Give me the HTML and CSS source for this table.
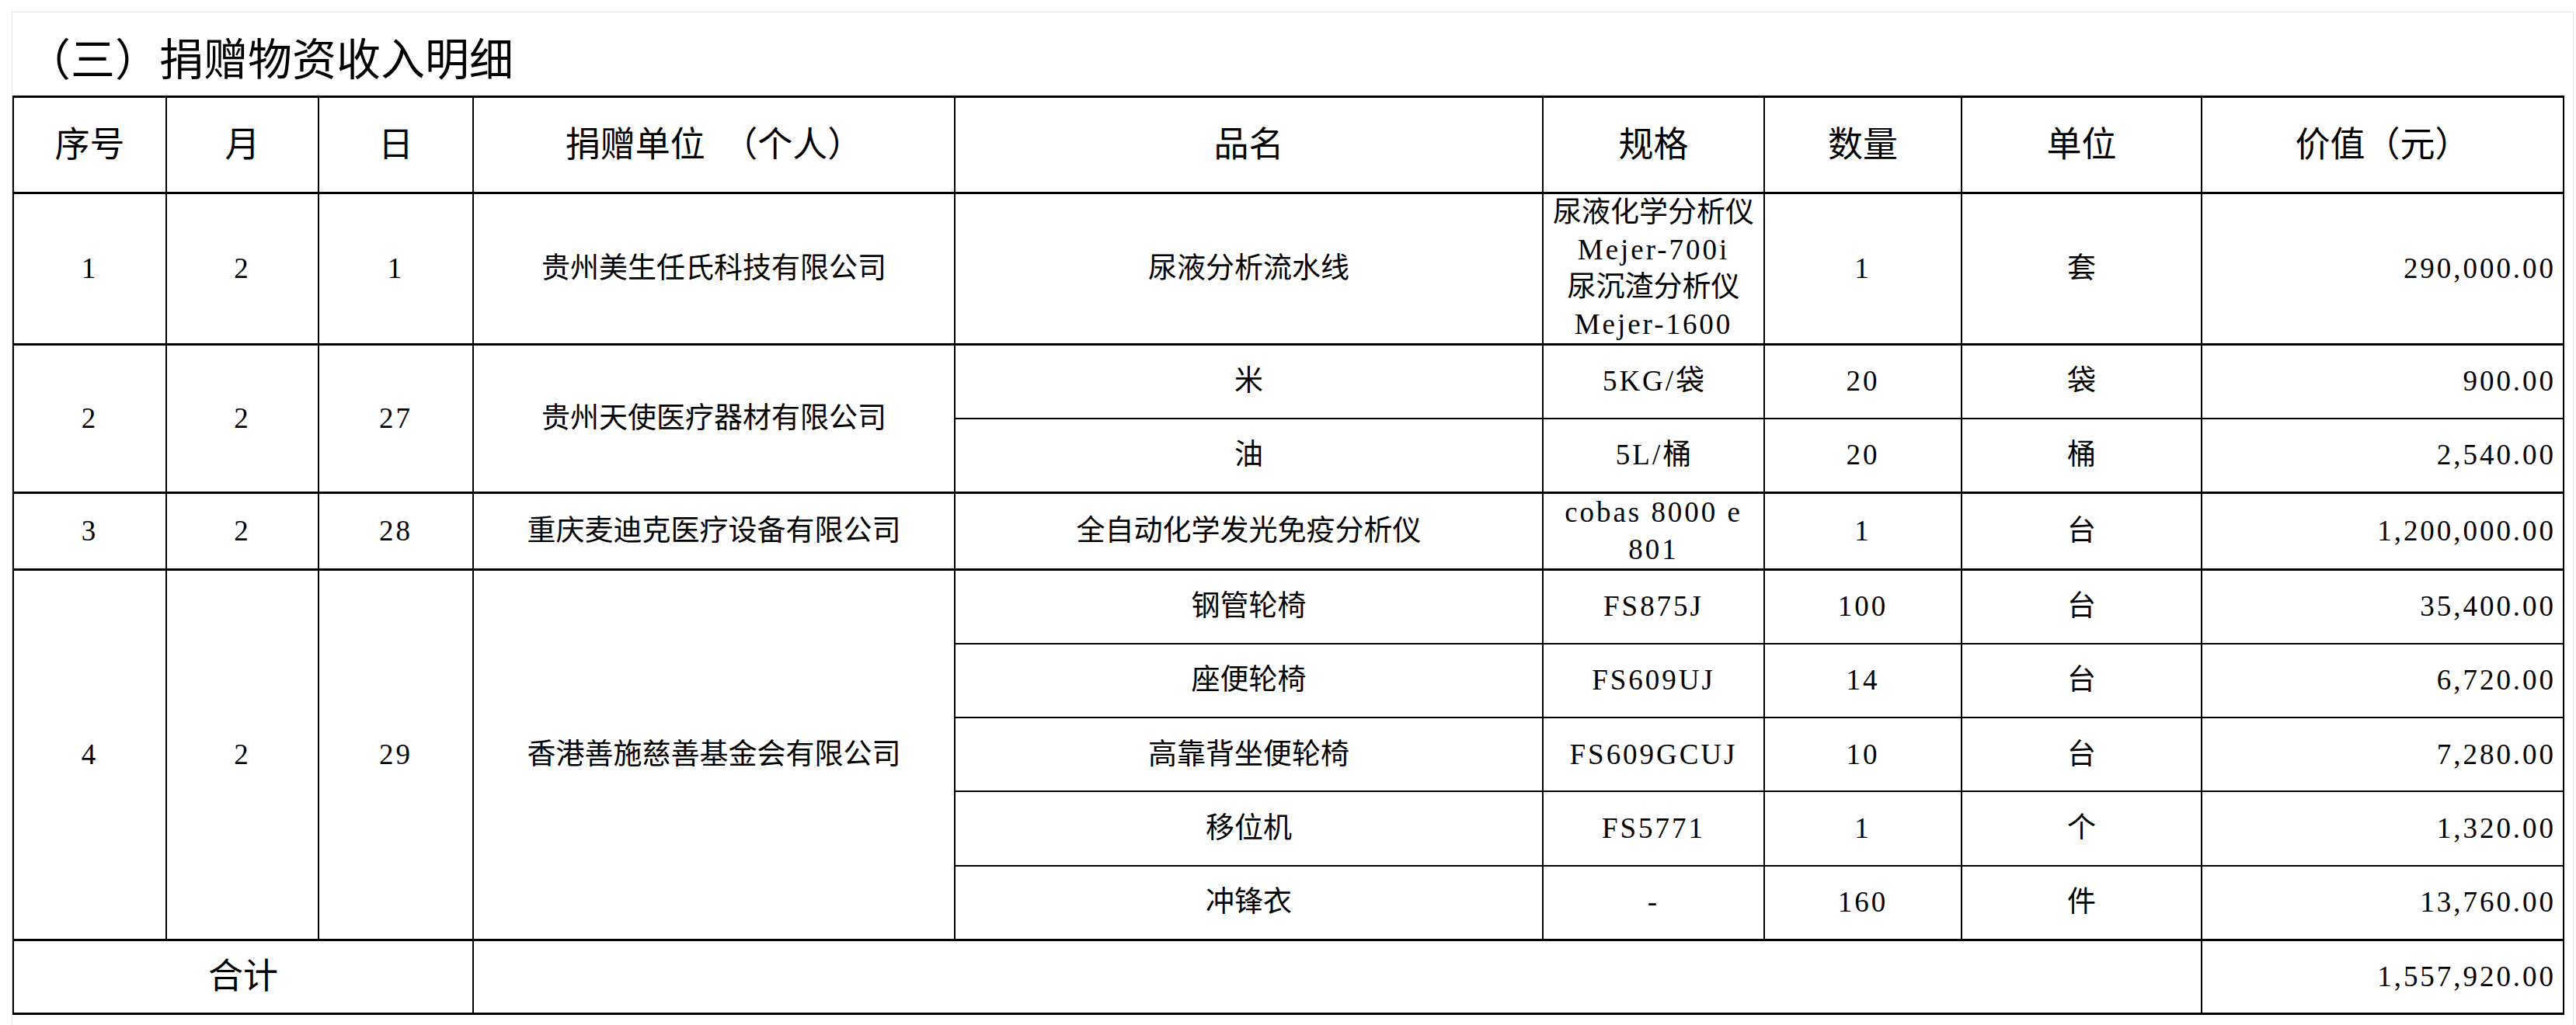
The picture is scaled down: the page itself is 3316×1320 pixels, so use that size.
FILE: index.html
```html
<!DOCTYPE html>
<html lang="zh-CN">
<head>
<meta charset="utf-8">
<title>捐赠物资收入明细</title>
<link rel="stylesheet" href="styles.css">
</head>
<body>
<div class="page">
  <div class="title">（三）捐赠物资收入明细</div>
  <table class="grid">
    <colgroup>
      <col class="c-no"><col class="c-m"><col class="c-d"><col class="c-org"><col class="c-name"><col class="c-spec"><col class="c-qty"><col class="c-unit"><col class="c-val">
    </colgroup>
    <thead>
      <tr class="r-head">
        <th>序号</th><th>月</th><th>日</th><th>捐赠单位　（个人）</th><th>品名</th><th>规格</th><th>数量</th><th>单位</th><th>价值（元）</th>
      </tr>
    </thead>
    <tbody>
      <tr class="r4">
        <td class="num">1</td><td class="num">2</td><td class="num">1</td>
        <td>贵州美生任氏科技有限公司</td>
        <td>尿液分析流水线</td>
        <td class="spec">尿液化学分析仪<br><span class="lat">Mejer-700i</span><br>尿沉渣分析仪<br><span class="lat">Mejer-1600</span></td>
        <td class="num">1</td><td>套</td><td class="val">290,000.00</td>
      </tr>
      <tr class="r2 sep">
        <td class="num" rowspan="2">2</td><td class="num" rowspan="2">2</td><td class="num" rowspan="2">27</td>
        <td rowspan="2">贵州天使医疗器材有限公司</td>
        <td>米</td><td class="spec"><span class="lat">5KG/</span>袋</td><td class="num">20</td><td>袋</td><td class="val">900.00</td>
      </tr>
      <tr class="r2">
        <td>油</td><td class="spec"><span class="lat">5L/</span>桶</td><td class="num">20</td><td>桶</td><td class="val">2,540.00</td>
      </tr>
      <tr class="r2 sep">
        <td class="num">3</td><td class="num">2</td><td class="num">28</td>
        <td>重庆麦迪克医疗设备有限公司</td>
        <td>全自动化学发光免疫分析仪</td>
        <td class="spec"><span class="lat">cobas 8000 e</span><br><span class="lat">801</span></td>
        <td class="num">1</td><td>台</td><td class="val">1,200,000.00</td>
      </tr>
      <tr class="r2 sep">
        <td class="num" rowspan="5">4</td><td class="num" rowspan="5">2</td><td class="num" rowspan="5">29</td>
        <td rowspan="5">香港善施慈善基金会有限公司</td>
        <td>钢管轮椅</td><td class="spec"><span class="lat">FS875J</span></td><td class="num">100</td><td>台</td><td class="val">35,400.00</td>
      </tr>
      <tr class="r2">
        <td>座便轮椅</td><td class="spec"><span class="lat">FS609UJ</span></td><td class="num">14</td><td>台</td><td class="val">6,720.00</td>
      </tr>
      <tr class="r2">
        <td>高靠背坐便轮椅</td><td class="spec"><span class="lat">FS609GCUJ</span></td><td class="num">10</td><td>台</td><td class="val">7,280.00</td>
      </tr>
      <tr class="r2">
        <td>移位机</td><td class="spec"><span class="lat">FS5771</span></td><td class="num">1</td><td>个</td><td class="val">1,320.00</td>
      </tr>
      <tr class="r2">
        <td>冲锋衣</td><td class="spec"><span class="lat">-</span></td><td class="num">160</td><td>件</td><td class="val">13,760.00</td>
      </tr>
      <tr class="r2 sep total">
        <td colspan="3" class="total-label">合计</td>
        <td colspan="5"></td>
        <td class="val">1,557,920.00</td>
      </tr>
    </tbody>
  </table>
</div>
</body>
</html>
```

FILE: styles.css
```css
html, body {
  margin: 0;
  padding: 0;
  background: #ffffff;
}

body {
  font-family: "Liberation Serif", "Noto Sans CJK SC", serif;
  color: #000000;
}

.page {
  margin: 15px 0 0 15px;
  width: 3298px;
  height: 1305px;
  border-top: 1px solid #e3e3e3;
  border-left: 1px solid #e3e3e3;
  border-right: 1px solid #e3e3e3;
  box-sizing: border-box;
  overflow: hidden;
}

.title {
  height: 107px;
  line-height: 112px;
  font-size: 57px;
  padding-left: 18px;
  font-family: "Noto Sans CJK SC", sans-serif;
  white-space: nowrap;
}

.grid {
  border-collapse: collapse;
  table-layout: fixed;
  width: 3283px;
  font-size: 37px;
}

.c-no { width: 197px; }
.c-m { width: 196px; }
.c-d { width: 199px; }
.c-org { width: 620px; }
.c-name { width: 757px; }
.c-spec { width: 285px; }
.c-qty { width: 254px; }
.c-unit { width: 309px; }
.c-val { width: 466px; }

.grid th,
.grid td {
  border: 2px solid #000;
  text-align: center;
  vertical-align: middle;
  padding: 0 2px;
  line-height: 48px;
  font-weight: normal;
}

.grid th {
  font-size: 45px;
  border-top: 3px solid #000;
  border-bottom: 3px solid #000;
  white-space: pre;
}

.r-head { height: 124px; }
.r4 { height: 191px; }
.r2 { height: 95.4px; }

.grid .sep td { border-top: 3px solid #000; }
.grid .total td { border-bottom: 3px solid #000; }

.num,
.val,
.lat {
  letter-spacing: 0.08em;
}

.grid td.spec {
  padding: 0;
}

.grid td.val {
  text-align: right;
  padding-right: 9px;
}

.grid td.total-label {
  font-size: 45px;
}
```
